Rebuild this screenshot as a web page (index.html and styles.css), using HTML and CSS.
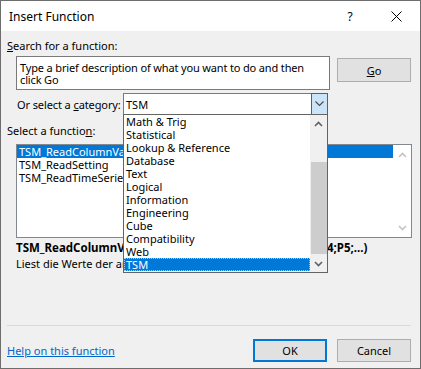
FILE: index.html
```html
<!DOCTYPE html>
<html>
<head>
<meta charset="utf-8">
<link rel="stylesheet" href="styles.css">
</head>
<body>
<div class="window">
  <div class="titlebar">
    <span class="title">Insert Function</span>
    <span class="cap help">?</span>
    <span class="cap close"><svg width="11" height="11" viewBox="0 0 11 11"><path d="M0.5 0.5 L10.5 10.5 M10.5 0.5 L0.5 10.5" stroke="#000" stroke-width="1" fill="none"/></svg></span>
  </div>
  <div class="content">
    <div class="label"><u>S</u>earch for a function:</div>
    <div class="search-row">
      <div class="search-box">Type a brief description of what you want to do and then click Go</div>
      <div class="btn go"><u>G</u>o</div>
    </div>
    <div class="cat-row">
      <span class="cat-label">Or select a <u>c</u>ategory:</span>
      <div class="combo">
        <span class="combo-text">TSM</span>
        <span class="combo-btn"><svg width="9" height="6" viewBox="0 0 9 6"><path d="M0.5 0.5 L4.5 4.5 L8.5 0.5" stroke="#4a4a4a" stroke-width="1.1" fill="none"/></svg></span>
        <div class="dropdown">
          <div class="dd-items">
            <div class="dd-item">Math &amp; Trig</div>
            <div class="dd-item">Statistical</div>
            <div class="dd-item">Lookup &amp; Reference</div>
            <div class="dd-item">Database</div>
            <div class="dd-item">Text</div>
            <div class="dd-item">Logical</div>
            <div class="dd-item">Information</div>
            <div class="dd-item">Engineering</div>
            <div class="dd-item">Cube</div>
            <div class="dd-item">Compatibility</div>
            <div class="dd-item">Web</div>
            <div class="dd-item sel">TSM</div>
          </div>
          <div class="dd-scroll">
            <div class="sb-btn"><svg width="9" height="6" viewBox="0 0 9 6"><path d="M1 5 L4.5 1.5 L8 5" stroke="#606060" stroke-width="1.6" fill="none"/></svg></div>
            <div class="sb-track"><div class="sb-thumb"></div></div>
            <div class="sb-btn"><svg width="9" height="6" viewBox="0 0 9 6"><path d="M1 1 L4.5 4.5 L8 1" stroke="#606060" stroke-width="1.6" fill="none"/></svg></div>
          </div>
        </div>
      </div>
    </div>
    <div class="label fn-label">Select a functio<u>n</u>:</div>
    <div class="fn-list">
      <div class="fn-items">
        <div class="fn-item sel">TSM_ReadColumnValues</div>
        <div class="fn-item">TSM_ReadSetting</div>
        <div class="fn-item">TSM_ReadTimeSeries</div>
      </div>
      <div class="fn-scroll">
        <div class="sb-btn"><svg width="9" height="6" viewBox="0 0 9 6"><path d="M1 5 L4.5 1.5 L8 5" stroke="#c4c4c4" stroke-width="1.6" fill="none"/></svg></div>
        <div class="sb-btn"><svg width="9" height="6" viewBox="0 0 9 6"><path d="M1 1 L4.5 4.5 L8 1" stroke="#c4c4c4" stroke-width="1.6" fill="none"/></svg></div>
      </div>
    </div>
    <div class="syntax">TSM_ReadColumnValues(Quelle;Spalte;Zeile;P1;P2;P3;P4;P5;...)</div>
    <div class="desc">Liest die Werte der angegebenen Spalte.</div>
    <div class="sep"></div>
    <div class="footer">
      <a class="link" href="#">Help on this function</a>
      <div class="btn ok">OK</div>
      <div class="btn cancel">Cancel</div>
    </div>
  </div>
</div>
</body>
</html>
```

FILE: styles.css
```css
* { box-sizing: border-box; }
html, body { margin: 0; padding: 0; background: #fff; }
body {
  font-family: "Noto Sans", "Segoe UI", sans-serif;
  font-size: 11px;
  color: #000;
}
u { text-decoration: underline; text-underline-offset: 1px; }
.window {
  width: 421px;
  height: 369px;
  border: 1px solid #6d6d6d;
  display: flex;
  flex-direction: column;
  background: #f0f0f0;
}
.titlebar {
  height: 30px;
  background: #fff;
  display: flex;
  align-items: center;
  padding-left: 8px;
  font-size: 12px;
  flex: none;
}
.title { flex: 1; }
.cap {
  width: 46px;
  height: 30px;
  display: flex;
  align-items: center;
  justify-content: center;
}
.help { font-size: 12px; padding-top: 1px; padding-right: 2px; }
.close { padding-right: 2px; }
.content {
  flex: 1;
  display: flex;
  flex-direction: column;
  padding: 7px 8px 6px 6px;
}
.label { line-height: 15px; }
.search-row {
  display: flex;
  align-items: flex-start;
  margin: 3px 1px 0 9px;
}
.search-box {
  width: 314px;
  height: 34px;
  border: 1px solid #7a7a7a;
  background: #fff;
  padding: 5px 3px 0 3px;
  line-height: 12px;
  letter-spacing: -0.15px;
}
.btn {
  width: 74px;
  height: 24px;
  background: #e1e1e1;
  border: 1px solid #adadad;
  display: flex;
  align-items: center;
  justify-content: center;
}
.go { margin-left: 7px; margin-top: 2px; }
.cat-row {
  display: flex;
  align-items: center;
  margin: 3px 0 0 9px;
  height: 22px;
}
.cat-label { width: 107px; padding-left: 1px; letter-spacing: -0.1px; }
.combo {
  position: relative;
  width: 205px;
  height: 22px;
  border: 1px solid #7a7a7a;
  background: #fff;
  display: flex;
  align-items: center;
}
.combo-text { flex: 1; padding-left: 2px; }
.combo-btn {
  width: 17px;
  height: 22px;
  margin: -1px -1px -1px 0;
  border: 1px solid #2f6c9e;
  background: #cce4f7;
  display: flex;
  align-items: center;
  justify-content: center;
}
.dropdown {
  position: absolute;
  left: -1px;
  top: 20px;
  width: 205px;
  height: 159px;
  border: 1px solid #646464;
  background: #fff;
  display: flex;
  z-index: 5;
}
.dd-items { flex: 1; }
.dd-item {
  height: 13px;
  line-height: 13px;
  padding-left: 2px;
  white-space: nowrap;
}
.dd-item.sel {
  background: #0078d7;
  color: #fff;
  outline: 1px dotted #9ec7ee;
  outline-offset: -1px;
}
.dd-scroll {
  width: 17px;
  background: #f0f0f0;
  display: flex;
  flex-direction: column;
}
.sb-btn {
  height: 17px;
  display: flex;
  align-items: center;
  justify-content: center;
  flex: none;
}
.sb-track { flex: 1; padding: 30px 0 0 1px; }
.sb-thumb { height: 92px; background: #cdcdcd; }
.fn-label { margin-top: 8px; }
.fn-list {
  margin: 6px 0 0 9px;
  height: 94px;
  border: 1px solid #828790;
  background: #fff;
  display: flex;
}
.fn-items { flex: 1; }
.fn-item {
  height: 13px;
  line-height: 13px;
  padding-left: 2px;
  white-space: nowrap;
}
.fn-item.sel { background: #0078d7; color: #fff; }
.fn-scroll {
  width: 18px;
  display: flex;
  flex-direction: column;
  justify-content: space-between;
  padding: 1px 0;
}
.syntax {
  margin: 2px 0 0 9px;
  font-weight: bold;
  font-size: 11.5px;
  line-height: 15px;
  white-space: nowrap;
}
.desc { margin: 1px 0 0 9px; line-height: 15px; }
.sep {
  margin-top: auto;
  margin-right: 1px;
  height: 1px;
  background: #d9d9d9;
}
.footer {
  margin: 13px 1px 0 0;
  height: 23px;
  display: flex;
  align-items: center;
}
.link { flex: 1; color: #0066cc; text-decoration: underline; }
.ok { height: 23px; border: 2px solid #0078d7; }
.cancel { height: 23px; margin-left: 10px; }
```
